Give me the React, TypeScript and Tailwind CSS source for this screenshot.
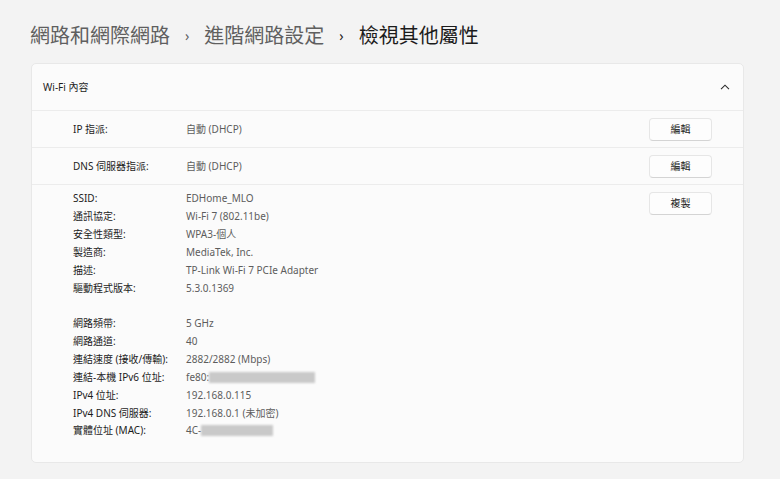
import React from 'react';

const FONT = '"Noto Sans", "Noto Sans CJK TC", sans-serif';

interface Prop {
  label: string;
  value?: string;
  redact?: number; // width of a blurred block after the value
}

const DETAILS: (Prop | null)[] = [
  { label: 'SSID:', value: 'EDHome_MLO' },
  { label: '通訊協定:', value: 'Wi-Fi 7 (802.11be)' },
  { label: '安全性類型:', value: 'WPA3-個人' },
  { label: '製造商:', value: 'MediaTek, Inc.' },
  { label: '描述:', value: 'TP-Link Wi-Fi 7 PCIe Adapter' },
  { label: '驅動程式版本:', value: '5.3.0.1369' },
  null,
  { label: '網路頻帶:', value: '5 GHz' },
  { label: '網路通道:', value: '40' },
  { label: '連結速度 (接收/傳輸):', value: '2882/2882 (Mbps)' },
  { label: '連結-本機 IPv6 位址:', value: 'fe80:', redact: 106 },
  { label: 'IPv4 位址:', value: '192.168.0.115' },
  { label: 'IPv4 DNS 伺服器:', value: '192.168.0.1 (未加密)' },
  { label: '實體位址 (MAC):', value: '4C-', redact: 72 },
];

function SmallButton({ children }: { children: React.ReactNode }) {
  return (
    <button className="w-[63px] h-[23px] rounded-[4px] bg-[#fdfdfd] border border-[#e6e6e6] border-b-[#d4d4d4] text-[10px] text-[#1b1b1b] flex items-center justify-center">
      {children}
    </button>
  );
}

function Line({ item }: { item: Prop | null }) {
  if (!item) return <div className="h-[17.85px]" />;
  return (
    <div className="flex h-[17.85px] items-center text-[10px]">
      <div className="w-[113px] shrink-0 text-[#1b1b1b]">{item.label}</div>
      <div className="flex items-center text-[#5d5d5d]">
        <span>{item.value}</span>
        {item.redact && (
          <span
            className="inline-block h-[11px] bg-[#c9c9c9] blur-[1px]"
            style={{ width: item.redact }}
          />
        )}
      </div>
    </div>
  );
}

export default function App() {
  return (
    <div className="min-h-screen bg-[#f3f3f3] pt-[22px] pb-4" style={{ fontFamily: FONT }}>
      {/* Breadcrumb */}
      <h1 className="pl-[30px] h-[28px] flex items-center text-[20px] leading-none text-[#5f5f5f] whitespace-nowrap">
        <span>網路和網際網路</span>
        <span className="mx-[15px] text-[14px] text-[#5f5f5f]">›</span>
        <span>進階網路設定</span>
        <span className="mx-[15px] text-[14px] text-[#1b1b1b]">›</span>
        <span className="text-[#1b1b1b]">檢視其他屬性</span>
      </h1>

      {/* Card */}
      <div className="ml-[31px] mr-[36px] mt-[13px] h-[400px] rounded-[5px] bg-[#fbfbfb] border border-[#e8e8e8] overflow-hidden">
        <div className="h-[46px] flex items-center justify-between pl-[11px] pr-[12px] text-[10px] text-[#1b1b1b]">
          <span>Wi-Fi 內容</span>
          <svg width="10" height="6" viewBox="0 0 10 6" className="mr-[1px]">
            <path d="M1 5.2 L5 1.2 L9 5.2" fill="none" stroke="#2b2b2b" strokeWidth="1.1" />
          </svg>
        </div>

        <div className="border-t border-[#ececec] h-[37px] flex items-center justify-between pl-[41px] pr-[31px]">
          <Line item={{ label: 'IP 指派:', value: '自動 (DHCP)' }} />
          <SmallButton>編輯</SmallButton>
        </div>

        <div className="border-t border-[#ececec] h-[37px] flex items-center justify-between pl-[41px] pr-[31px]">
          <Line item={{ label: 'DNS 伺服器指派:', value: '自動 (DHCP)' }} />
          <SmallButton>編輯</SmallButton>
        </div>

        <div className="border-t border-[#ececec] flex justify-between pl-[41px] pr-[31px] pt-[5px]">
          <div className="flex flex-col">
            {DETAILS.map((item, i) => (
              <Line key={i} item={item} />
            ))}
          </div>
          <div className="pt-[2px]">
            <SmallButton>複製</SmallButton>
          </div>
        </div>
      </div>
    </div>
  );
}
